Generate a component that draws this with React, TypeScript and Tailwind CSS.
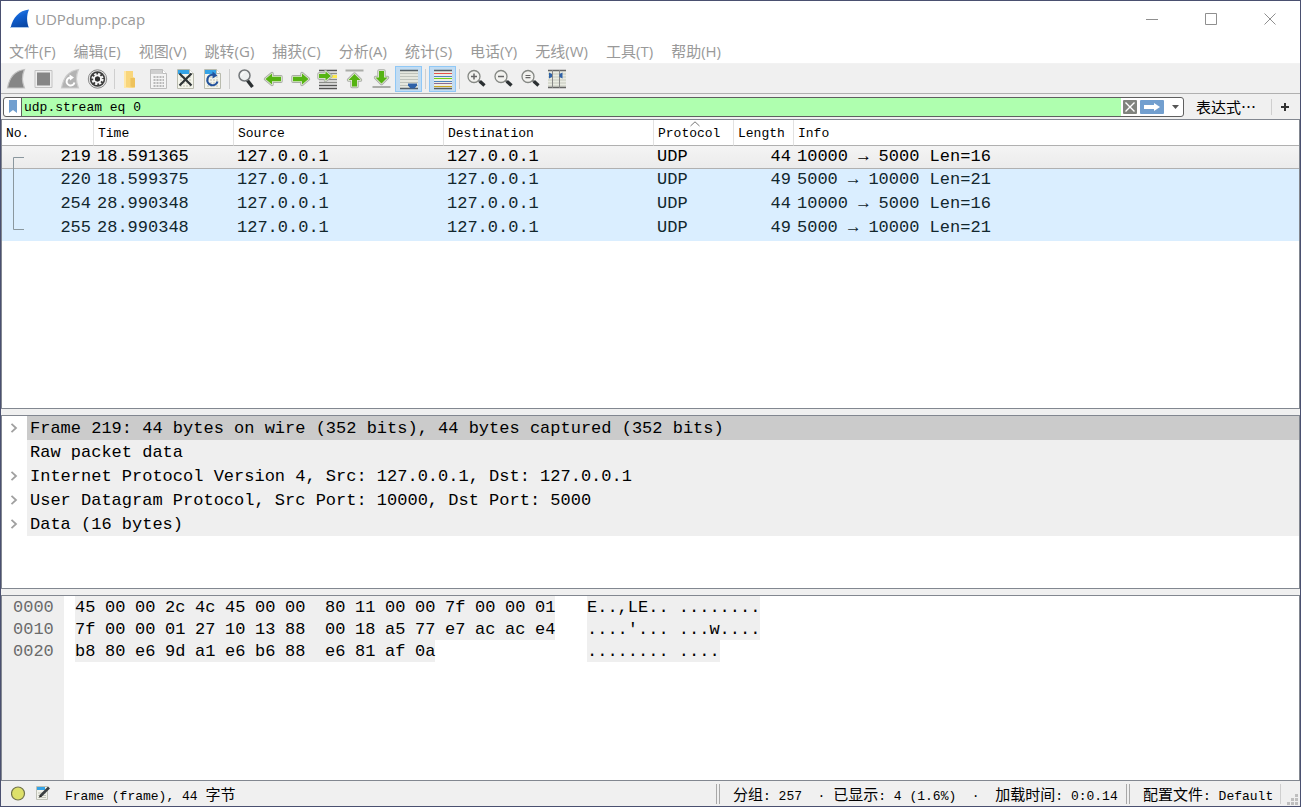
import type { ReactNode } from "react";

type Packet = {
  no: number;
  time: string;
  source: string;
  destination: string;
  protocol: string;
  length: number;
  info: string;
};

const packets: Packet[] = [
  { no: 219, time: "18.591365", source: "127.0.0.1", destination: "127.0.0.1", protocol: "UDP", length: 44, info: "10000 → 5000 Len=16" },
  { no: 220, time: "18.599375", source: "127.0.0.1", destination: "127.0.0.1", protocol: "UDP", length: 49, info: "5000 → 10000 Len=21" },
  { no: 254, time: "28.990348", source: "127.0.0.1", destination: "127.0.0.1", protocol: "UDP", length: 44, info: "10000 → 5000 Len=16" },
  { no: 255, time: "28.990348", source: "127.0.0.1", destination: "127.0.0.1", protocol: "UDP", length: 49, info: "5000 → 10000 Len=21" },
];

const menus = [
  "文件(F)",
  "编辑(E)",
  "视图(V)",
  "跳转(G)",
  "捕获(C)",
  "分析(A)",
  "统计(S)",
  "电话(Y)",
  "无线(W)",
  "工具(T)",
  "帮助(H)",
];

const columns = ["No.", "Time", "Source", "Destination", "Protocol", "Length", "Info"];

const details = [
  { text: "Frame 219: 44 bytes on wire (352 bits), 44 bytes captured (352 bits)", expandable: true },
  { text: "Raw packet data", expandable: false },
  { text: "Internet Protocol Version 4, Src: 127.0.0.1, Dst: 127.0.0.1", expandable: true },
  { text: "User Datagram Protocol, Src Port: 10000, Dst Port: 5000", expandable: true },
  { text: "Data (16 bytes)", expandable: true },
];

const hexRows = [
  { offset: "0000", bytes: "45 00 00 2c 4c 45 00 00 80 11 00 00 7f 00 00 01", ascii: "E..,LE.. ........" },
  { offset: "0010", bytes: "7f 00 00 01 27 10 13 88 00 18 a5 77 e7 ac ac e4", ascii: "....'... ...w...." },
  { offset: "0020", bytes: "b8 80 e6 9d a1 e6 b6 88 e6 81 af 0a", ascii: "........ ...." },
];

export default function App() {
  return (
    <div className="flex h-screen min-h-[600px] flex-col border border-[#4a5070] bg-[#f0f0f0] font-['Liberation_Mono','Noto_Sans_CJK_SC',monospace] text-black">
      <TitleBar />
      <MenuBar />
      <Toolbar />
      <FilterBar />
      <main className="flex min-h-0 flex-1 flex-col gap-1.5">
        <PacketList />
        <PacketDetails />
        <PacketBytes />
      </main>
      <StatusBar />
    </div>
  );
}

function TitleBar() {
  return (
    <header className="flex h-9 shrink-0 items-center bg-white pr-px pl-[9px]">
      <svg className="size-5" viewBox="0 0 20 20" aria-hidden="true">
        <defs>
          <linearGradient id="fin" x1="0" y1="0" x2="0.4" y2="1">
            <stop offset="0" stopColor="#3d8df0" />
            <stop offset="0.5" stopColor="#0f5fd0" />
            <stop offset="1" stopColor="#0a49a8" />
          </linearGradient>
        </defs>
        <path d="M0.5 19C3 8.500 9 1.500 19 0.500C16.500 6 16.500 13 19 19Z" fill="url(#fin)" />
        <path d="M0.500 18.500H19" stroke="#a9c6ea" strokeWidth="1" />
      </svg>
      <h1 className="ml-[5px] flex-1 font-['Open_Sans','Noto_Sans_CJK_SC',sans-serif] text-[15px] text-[#999]">
        UDPdump.pcap
      </h1>
      <WindowButton label="最小化">
        <path d="M0 6.500H12" />
      </WindowButton>
      <WindowButton label="最大化">
        <path d="M0.500 0.500H11.500V11.500H0.500Z" />
      </WindowButton>
      <WindowButton label="关闭">
        <path d="M0.500 0.500L11.500 11.500M11.500 0.500L0.500 11.500" />
      </WindowButton>
    </header>
  );
}

function WindowButton({ label, children }: { label: string; children: ReactNode }) {
  return (
    <button type="button" aria-label={label} className="flex h-full w-[59px] items-center justify-center">
      <svg className="size-3" viewBox="0 0 12 12" fill="none" stroke="#8f8f8f" strokeWidth="1">
        {children}
      </svg>
    </button>
  );
}

function MenuBar() {
  return (
    <nav className="flex h-[27px] shrink-0 items-center gap-[18px] border-b border-[#f2f2f2] bg-white pt-0.5 pl-2 font-['Open_Sans','Noto_Sans_CJK_SC',sans-serif] text-[15px] text-[#999]">
      {menus.map((menu) => (
        <button key={menu} type="button" className="whitespace-nowrap">
          {menu}
        </button>
      ))}
    </nav>
  );
}

function ToolButton({ label, active, children }: { label: string; active?: boolean; children: ReactNode }) {
  return (
    <button
      type="button"
      aria-label={label}
      aria-pressed={active}
      className={`flex h-[26px] w-[27px] items-center justify-center ${
        active ? "bg-[#c2dcf2] outline-1 -outline-offset-1 outline-[#90c8f6]" : ""
      }`}
    >
      <svg className="h-[22px] w-[21px]" viewBox="0 0 21 22" fill="none">
        {children}
      </svg>
    </button>
  );
}

function ToolSeparator() {
  return <div className="mx-[3px] h-5 w-px bg-[#cfcfcf]" />;
}

/* page with a blue tab, shared by the file icons */
function FileSheet() {
  return (
    <>
      <path d="M2.500 1.500H14.500L18.500 5.500V20.500H2.500Z" fill="#f4f5ec" stroke="#b9bbae" />
      <path d="M3 2H14.500L14.500 6H3Z" fill="#35a3e6" />
      <path d="M14.500 1.500V5.500H18.500" fill="#fff" stroke="#b9bbae" />
      <path d="M5 9H17M5 12H17M5 15H17M5 18H17" stroke="#bfc1b4" strokeDasharray="2 1" />
    </>
  );
}

function Magnifier({ children }: { children: ReactNode }) {
  return (
    <>
      <path d="M12.500 12.500L14 14" stroke="#777" strokeWidth="2" />
      <path d="M13.800 13.300L18.500 17.500" stroke="#2b3032" strokeWidth="3.400" />
      <circle cx="8" cy="8.500" r="6" fill="#f2f2ef" stroke="#858884" strokeWidth="1.300" />
      <g stroke="#666" strokeWidth="1.500">{children}</g>
    </>
  );
}

/* green arrow with a light rim and a grey outline */
function Arrow({ d }: { d: string }) {
  return (
    <>
      <path d={d} stroke="#a9aca6" strokeWidth="3.400" strokeLinejoin="round" />
      <path d={d} stroke="#e4ecd8" strokeWidth="1.600" strokeLinejoin="round" />
      <path d={d} fill="#56b313" />
    </>
  );
}

function Toolbar() {
  return (
    <div className="flex h-[30px] shrink-0 items-center border-b border-[#b0b0b0] pt-px pl-0.5">
      <ToolButton label="开始捕获">
        <path d="M1.500 20C3.500 9 9 2.500 18.500 1.500C16 7 16 14 18.500 20Z" fill="#868686" stroke="#c2c2c2" strokeWidth="1.200" />
      </ToolButton>
      <ToolButton label="停止捕获">
        <path d="M2 2.500H19V19.500H2Z" fill="#eee" stroke="#c2c2c2" />
        <path d="M4 4.500H17V17.500H4Z" fill="#868686" />
      </ToolButton>
      <ToolButton label="重新开始捕获">
        <path d="M1.500 20C3.500 9 9 2.500 18.500 1.500C16 7 16 14 18.500 20Z" fill="#b3b3b3" stroke="#cdcdcd" strokeWidth="1.200" />
        <path d="M14.500 14.500A4 4 0 1 1 11 9.500" stroke="#fff" strokeWidth="2" />
        <path d="M9.500 6.500L14 9.500L10 12.500Z" fill="#fff" />
      </ToolButton>
      <ToolButton label="捕获选项">
        <circle cx="10.500" cy="11" r="9.200" fill="#e8e8e8" stroke="#8a8a8a" />
        <circle cx="10.500" cy="11" r="7.700" fill="#3c3c3c" />
        <circle cx="10.500" cy="11" r="4.900" stroke="#f4f4f4" strokeWidth="2.400" strokeDasharray="2.200 1.648" />
        <circle cx="10.500" cy="11" r="3.400" stroke="#f4f4f4" strokeWidth="2" />
        <circle cx="10.500" cy="11" r="2.500" fill="#2e2e2e" />
      </ToolButton>
      <ToolSeparator />
      <ToolButton label="打开">
        <path d="M3 3H12V9L14 10V19L12 20H3Z" fill="#f9d67b" />
        <path d="M3 3H5V19L12 20H3Z" fill="#ffe8a8" />
        <path d="M9.500 10H14V19.500L9.500 18.500Z" fill="#eec25c" />
      </ToolButton>
      <ToolButton label="保存">
        <path d="M2.500 1.500H14.500L18.500 5.500V20.500H2.500Z" fill="#f4f4f4" stroke="#bdbdbd" />
        <path d="M3 2H14V6H3Z" fill="#cfcfcf" />
        <path d="M14.500 1.500V5.500H18.500" fill="#fff" stroke="#bdbdbd" />
        <path d="M5.500 9H16M5.500 12H16M5.500 15H16M5.500 18H16" stroke="#b9b9b9" strokeWidth="2" strokeDasharray="2 1" />
      </ToolButton>
      <ToolButton label="关闭文件">
        <FileSheet />
        <path d="M4.500 5.500L16.500 17.500M16.500 5.500L4.500 17.500" stroke="#2e3436" strokeWidth="2.200" />
      </ToolButton>
      <ToolButton label="重新加载">
        <FileSheet />
        <path d="M15.500 13.500A5.200 5.200 0 1 1 12 7" stroke="#23539c" strokeWidth="2.200" />
        <path d="M10.500 3.500L15.500 7.500L10.500 10.500Z" fill="#23539c" />
      </ToolButton>
      <ToolSeparator />
      <ToolButton label="查找">
        <path d="M10 11.500L12 13.500" stroke="#777" strokeWidth="2" />
        <path d="M11.500 12.500L16.500 19" stroke="#2b3032" strokeWidth="3.400" />
        <circle cx="8.500" cy="7.500" r="5.500" fill="#eceff0" stroke="#73777a" strokeWidth="1.500" />
        <path d="M5.500 7.500A3 3 0 0 1 8.500 4.500" stroke="#fff" strokeWidth="1.200" />
      </ToolButton>
      <ToolButton label="上一个">
        <Arrow d="M2.500 11L9 5.500V8.800H18V13.200H9V16.500Z" />
      </ToolButton>
      <ToolButton label="下一个">
        <Arrow d="M18.500 11L12 5.500V8.800H3V13.200H12V16.500Z" />
      </ToolButton>
      <ToolButton label="转到分组">
        <path d="M2 2.500H20M2 17.500H20M2 20.500H20" stroke="#555" strokeWidth="1.400" />
        <path d="M2 5.500H20M2 11.500H20M2 14.500H20" stroke="#8a8c88" strokeWidth="1.400" />
        <path d="M14 8.500H20" stroke="#fce94f" strokeWidth="3" />
        <Arrow d="M14 8L8.500 3.500V6H2V10H8.500V12.500Z" />
      </ToolButton>
      <ToolButton label="首个分组">
        <path d="M1.500 2.500H19.500" stroke="#aaaca8" strokeWidth="2" />
        <Arrow d="M10.500 6L16.500 12H13V18.500H8V12H4.500Z" />
      </ToolButton>
      <ToolButton label="最新分组">
        <path d="M1.500 19H19.500" stroke="#aaaca8" strokeWidth="2" />
        <Arrow d="M10.500 15.500L16.500 9.500H13V3H8V9.500H4.500Z" />
      </ToolButton>
      <ToolButton label="自动滚动" active>
        <path d="M2 2H20V20H2Z" fill="#e5e7de" />
        <path d="M2 2.500H20M2 20.500H20" stroke="#555f66" strokeWidth="1.500" />
        <path d="M2 5.500H20M2 8.500H20M2 11.500H20M2 14.500H20M2 17.500H20" stroke="#bfc3bb" />
        <path d="M10 15.500H19V17.500L16.500 20.500H12.500L10 17.500Z" fill="#2f62a8" />
      </ToolButton>
      <ToolSeparator />
      <ToolButton label="着色" active>
        <path d="M2 2H20V20H2Z" fill="#eceee6" />
        <path d="M2 2.500H20M2 20.500H20" stroke="#555f66" strokeWidth="1.500" />
        <path d="M2 5.500H20" stroke="#e2524b" />
        <path d="M2 8.500H20" stroke="#4d82bf" />
        <path d="M2 10.500H20" stroke="#73d216" />
        <path d="M2 13.500H20" stroke="#4d82bf" />
        <path d="M2 15.500H20" stroke="#8a6a92" />
        <path d="M2 18.500H20" stroke="#c9a41f" />
      </ToolButton>
      <ToolSeparator />
      <ToolButton label="放大">
        <Magnifier>
          <path d="M5 8.500H11M8 5.500V11.500" />
        </Magnifier>
      </ToolButton>
      <ToolButton label="缩小">
        <Magnifier>
          <path d="M5 8.500H11" />
        </Magnifier>
      </ToolButton>
      <ToolButton label="正常大小">
        <Magnifier>
          <path d="M5.500 7.500H10.500M5.500 9.700H10.500" strokeWidth="1.200" />
        </Magnifier>
      </ToolButton>
      <ToolButton label="调整列宽">
        <path d="M1 2H19V20H1Z" fill="#e9ebe2" />
        <path d="M1 6H19M1 9H19M1 12H19M1 15H19M1 18H19" stroke="#c6c9be" />
        <path d="M1 2.500H19M1 19.500H19" stroke="#666" strokeWidth="1.400" />
        <path d="M5.500 2V20M12.500 2V20" stroke="#888" />
        <path d="M2 4.500L5 6V9L2 10.500ZM15.500 4.500L12.500 6V9L15.500 10.500Z" fill="#2f62a8" />
      </ToolButton>
    </div>
  );
}

function FilterBar() {
  return (
    <div className="flex h-[25px] shrink-0 items-center pr-2.5 pl-0.5">
      <div className="flex h-5 min-w-0 flex-1 overflow-hidden rounded-[3px] border border-[#5f5f5f] bg-white">
        <button type="button" aria-label="书签" className="flex w-[18px] items-center justify-center border-r border-[#5f5f5f]">
          <svg className="h-3.5 w-2.5" viewBox="0 0 10 14">
            <path d="M1 0H9V13L5 10L1 13Z" fill="#729fcf" />
          </svg>
        </button>
        <input
          aria-label="显示过滤器"
          defaultValue="udp.stream eq 0"
          className="min-w-0 flex-1 bg-[#afffaf] pt-0.5 pl-0.5 text-[13px] outline-none"
        />
        <div className="flex items-center gap-[3px] pl-0.5">
          <button type="button" aria-label="清除">
            <svg className="h-3.5 w-3.5" viewBox="0 0 14 14">
              <rect width="14" height="14" rx="1" fill="#80837e" />
              <path d="M2.500 2.500L11.500 11.500M11.500 2.500L2.500 11.500" stroke="#fff" strokeWidth="1.400" />
            </svg>
          </button>
          <button type="button" aria-label="应用">
            <svg className="h-3.5 w-6" viewBox="0 0 24 14">
              <rect width="24" height="14" rx="1" fill="#729fcf" />
              <path d="M4 5H14V3L20 7L14 11V9H4Z" fill="#fff" />
            </svg>
          </button>
          <button type="button" aria-label="历史" className="flex w-4 justify-center">
            <svg className="h-1 w-[7px]" viewBox="0 0 7 4">
              <path d="M0 0H7L3.500 4Z" fill="#555" />
            </svg>
          </button>
        </div>
      </div>
      <button type="button" className="ml-3 w-[75px] text-left font-['Noto_Sans_CJK_SC',sans-serif] text-[15px] leading-5">
        表达式…
      </button>
      <div className="h-4 w-px bg-[#cfcfcf]" />
      <button type="button" aria-label="添加" className="ml-2">
        <svg className="size-2.5" viewBox="0 0 10 10">
          <path d="M1 5H9M5 1V9" stroke="#333" strokeWidth="2" />
        </svg>
      </button>
    </div>
  );
}

function PacketList() {
  return (
    <section className="relative min-h-0 flex-[288] basis-0 overflow-hidden border border-[#828790] bg-white">
      <table className="w-full table-fixed border-separate border-spacing-0">
        <colgroup>
          <col className="w-[92px]" />
          <col className="w-[140px]" />
          <col className="w-[210px]" />
          <col className="w-[210px]" />
          <col className="w-20" />
          <col className="w-[60px]" />
          <col />
        </colgroup>
        <thead>
          <tr className="h-[26px] text-[13px]">
            {columns.map((column) => (
              <th
                key={column}
                scope="col"
                className="relative border-r border-b border-r-[#e2e2e2] border-b-[#b0b0b0] pt-0.5 pl-1 text-left font-normal last:border-r-0"
              >
                {column === "Protocol" && (
                  <svg className="absolute top-px left-9 h-1.5 w-2.5" viewBox="0 0 10 6" fill="none">
                    <path d="M0.500 5L5 0.800L9.500 5" stroke="#777" />
                  </svg>
                )}
                {column}
              </th>
            ))}
          </tr>
        </thead>
        <tbody className="text-[17px] leading-[22px] whitespace-nowrap">
          {packets.map((packet, index) => (
            <tr
              key={packet.no}
              className={
                index === 0
                  ? "h-[23px] bg-linear-to-b from-[#f4f4f4] to-[#ebebeb] *:border-b *:border-[#b0b0b0]"
                  : "h-6 bg-[#daeeff] text-[#12272e] *:pb-0.5"
              }
            >
              <td className="pr-[3px] text-right">{packet.no}</td>
              <td className="pl-[3px]">{packet.time}</td>
              <td className="pl-[3px]">{packet.source}</td>
              <td className="pl-[3px]">{packet.destination}</td>
              <td className="pl-[3px]">{packet.protocol}</td>
              <td className="pr-[3px] text-right">{packet.length}</td>
              <td className="pl-[3px]">{packet.info}</td>
            </tr>
          ))}
        </tbody>
      </table>
      {/* conversation bracket */}
      <svg className="absolute top-[37px] left-[11px] h-[74px] w-3" viewBox="0 0 12 74" fill="none">
        <path d="M11 0.500H0.500V72.500H11" stroke="#8a979e" />
      </svg>
    </section>
  );
}

function PacketDetails() {
  return (
    <section className="min-h-0 flex-[172] basis-0 overflow-hidden border border-[#828790] bg-white">
      <ul className="text-[17px] leading-[22px] whitespace-nowrap">
        {details.map((detail, index) => (
          <li key={detail.text} className="flex">
            <div className="flex w-[25px] shrink-0 items-center pl-2">
              {detail.expandable && (
                <button type="button" aria-label="展开">
                  <svg className="h-2.5 w-2" viewBox="0 0 8 10" fill="none">
                    <path d="M1.500 0.800L6 5L1.500 9.200" stroke="#a0a0a0" strokeWidth="1.800" />
                  </svg>
                </button>
              )}
            </div>
            <span className={`flex-1 pt-0.5 pl-[3px] ${index === 0 ? "bg-[#cbcbcb]" : "bg-[#efefef]"}`}>
              {detail.text}
            </span>
          </li>
        ))}
      </ul>
    </section>
  );
}

function PacketBytes() {
  return (
    <section className="flex min-h-0 flex-[184] basis-0 overflow-hidden border border-[#828790] bg-white text-[17px] leading-5">
      <div className="w-[62px] shrink-0 bg-[#efefef] pl-[11px] text-[#6b6b6b]">
        {hexRows.map((row) => (
          <div key={row.offset} className="pt-0.5">
            {row.offset}
          </div>
        ))}
      </div>
      <div className="ml-[11px] w-[512px] shrink-0">
        {hexRows.map((row) => (
          <div key={row.offset} className="flex">
            {row.bytes.split(" ").map((byte, index) => (
              <span
                key={index}
                className={`bg-[#efefef] pt-0.5 last:w-5 ${index === 7 ? "w-10" : "w-[30px]"}`}
              >
                {byte}
              </span>
            ))}
          </div>
        ))}
      </div>
      <div>
        {hexRows.map((row) => (
          <div key={row.offset} className="flex">
            <span className="bg-[#efefef] pt-0.5">{row.ascii}</span>
          </div>
        ))}
      </div>
    </section>
  );
}

function StatusDivider() {
  return <div className="h-5 w-1 border-x border-[#a8a8a8]" />;
}

/* latin part of a status label, set smaller than the CJK part */
function Small({ children }: { children: ReactNode }) {
  return <span className="text-[13px]">{children}</span>;
}

function StatusBar() {
  return (
    <footer className="flex h-[25px] shrink-0 items-center pl-2.5 text-[15px] leading-5 whitespace-pre">
      <button type="button" aria-label="专家信息">
        <svg className="size-4" viewBox="0 0 16 16">
          <circle cx="7" cy="7.500" r="6.500" fill="#dde06a" stroke="#71734a" strokeWidth="1.200" />
        </svg>
      </button>
      <button type="button" aria-label="捕获文件注释" className="ml-2">
        <svg className="size-4" viewBox="0 0 16 16" fill="none">
          <path d="M1.500 0.500H12.500V13.500H1.500Z" fill="#f1f2ea" stroke="#bfc1b6" />
          <path d="M2 1H10V4H2Z" fill="#35a3e6" />
          <path d="M3 7H11M3 9.500H11M3 11.500H11" stroke="#c3c5b9" />
          <path d="M5.500 10L14 1.500" stroke="#3b4042" strokeWidth="2.600" />
          <path d="M4 11.500L4.800 8.800L6.800 10.700Z" fill="#222" />
        </svg>
      </button>
      <span className="ml-3.5 flex-1 pt-1.5">
        <Small>Frame (frame), 44 </Small>字节
      </span>
      <StatusDivider />
      <span className="ml-[13px] w-[393px] pt-1.5">
        分组<Small>: 257  · </Small>已显示<Small>: 4 (1.6%)  ·  </Small>加载时间<Small>: 0:0.14</Small>
      </span>
      <StatusDivider />
      <button type="button" className="ml-[13px] w-[137px] pt-1.5 text-left">
        配置文件<Small>: Default</Small>
      </button>
      <div className="h-5 w-px bg-[#cfcfcf]" />
      <svg className="ml-1.5 h-3 w-[13px] self-end" viewBox="0 0 13 12" fill="#bfbfbf">
        <path d="M8 0H11V3H8ZM4 4H7V7H4ZM8 4H11V7H8ZM0 8H3V11H0ZM4 8H7V11H4ZM8 8H11V11H8Z" />
      </svg>
    </footer>
  );
}
